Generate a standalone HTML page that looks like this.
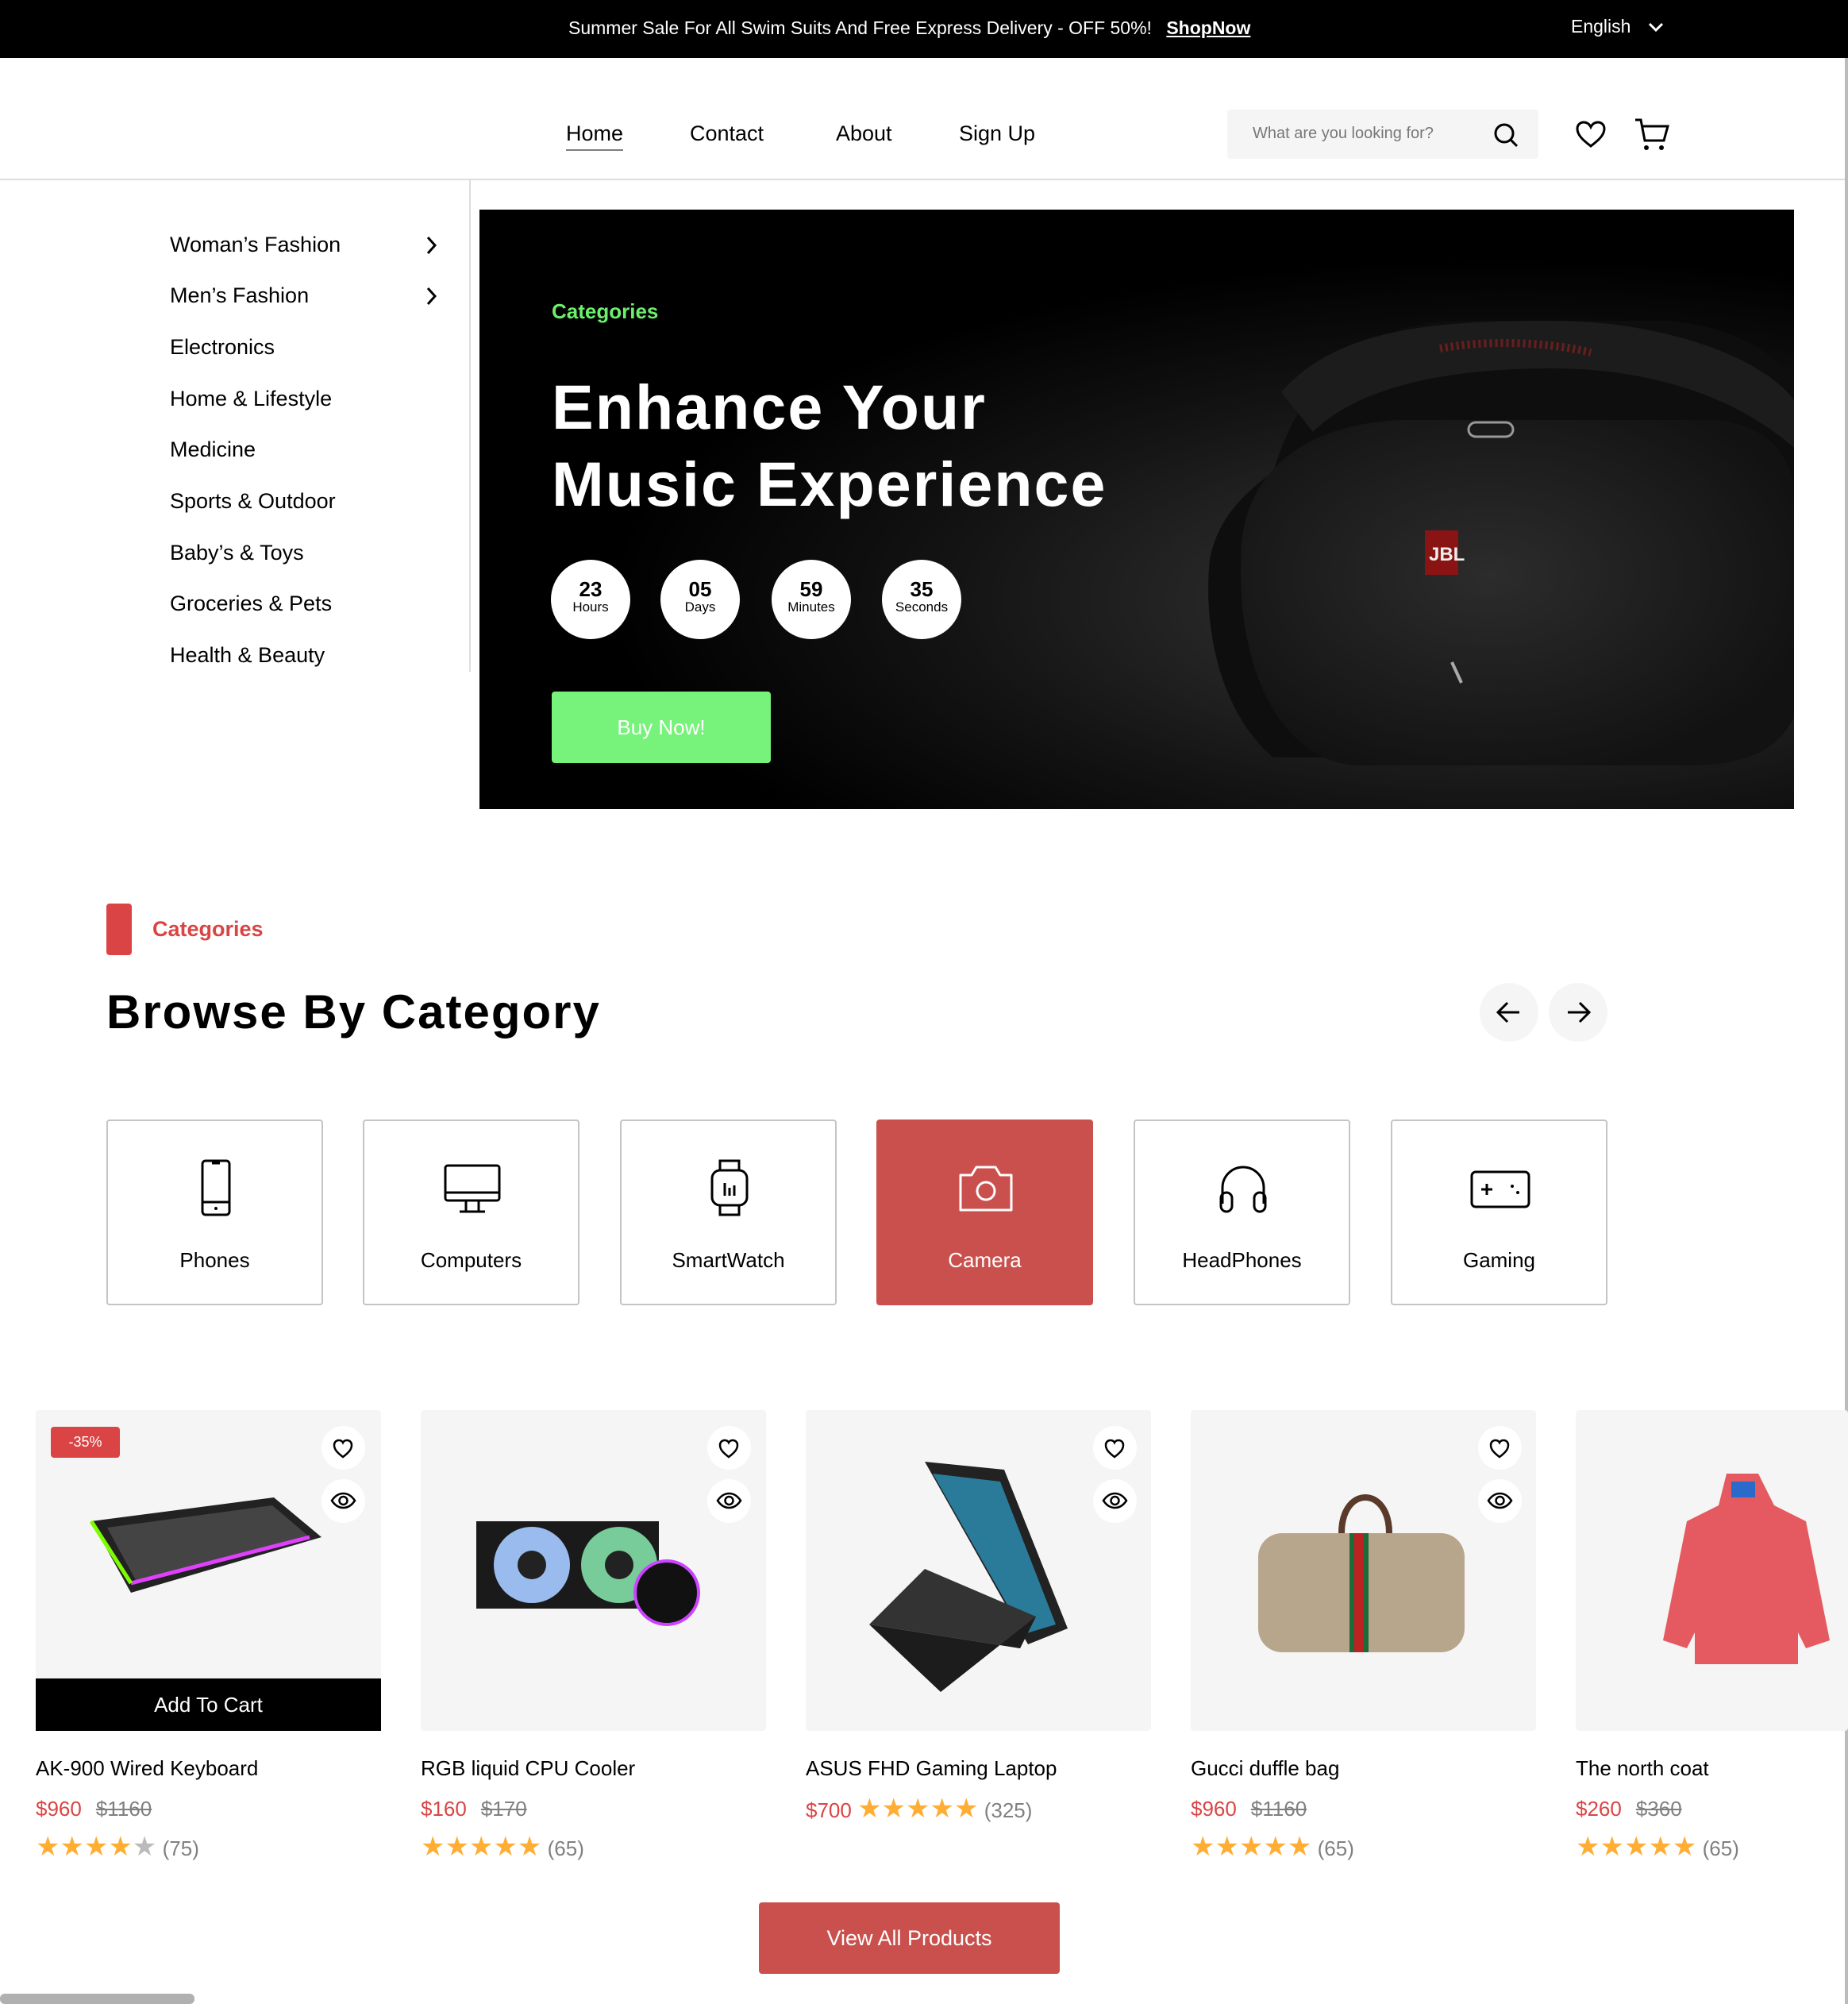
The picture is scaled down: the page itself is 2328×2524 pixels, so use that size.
<!DOCTYPE html>
<html><head><meta charset="utf-8"><style>
*{margin:0;padding:0;box-sizing:border-box}
body{width:2328px;height:2524px;position:relative;background:#fff;font-family:"Liberation Sans",sans-serif;color:#000;overflow:hidden}
.a{position:absolute}
.top{left:0;top:0;width:2328px;height:73px;background:#000;color:#fff;font-size:23px}
.nav{font-size:27px}
.side{font-size:27px;left:214px}
.circ{width:100px;height:100px;border-radius:50%;background:#fff;text-align:center;color:#000}
.circ b{display:block;font-size:26px;margin-top:24px;line-height:26px}
.circ span{display:block;font-size:17px;line-height:20px}
.cat{width:273px;height:234px;border:2px solid #c4c4c4;border-radius:4px;text-align:center;font-size:26px}
.cat svg{position:absolute;left:96px;top:44px}
.cat div{position:absolute;left:0;right:0;top:160px}
.card{width:435px;height:404px;top:1776px;background:#f5f5f5;border-radius:4px}
.ic{width:55px;height:55px;border-radius:50%;background:#fff;right:20px}
.pn{font-size:26px;top:2212px}
.pr{font-size:26px;top:2263px;color:#DB4444}
.pr s{color:#808080;margin-left:18px}
.st{top:2306px;font-size:26px;color:#808080}
.st i{font-style:normal;color:#FFAD33;font-size:34px;letter-spacing:0px}
</style></head><body>
<div class="a top">
 <div class="a" style="left:716px;top:22px">Summer Sale For All Swim Suits And Free Express Delivery - OFF 50%! <b style="text-decoration:underline;margin-left:12px">ShopNow</b></div>
 <div class="a" style="left:1979px;top:20px">English <svg width="22" height="14" style="margin-left:14px" viewBox="0 0 22 14"><path d="M3 3l8 8 8-8" stroke="#fff" stroke-width="3" fill="none"/></svg></div>
</div>
<div class="a" style="left:2324px;top:73px;width:4px;height:2451px;background:#bbb"></div>
<div class="a nav" style="left:713px;top:153px;border-bottom:2px solid #7d7d7d;padding-bottom:4px">Home</div>
<div class="a nav" style="left:869px;top:153px">Contact</div>
<div class="a nav" style="left:1053px;top:153px">About</div>
<div class="a nav" style="left:1208px;top:153px">Sign Up</div>
<div class="a" style="left:1546px;top:138px;width:392px;height:62px;background:#f5f5f5;border-radius:4px;font-size:20px;color:#777;padding:19px 0 0 32px">What are you looking for?
 <svg class="a" style="right:24px;top:15px" width="34" height="34" viewBox="0 0 34 34"><circle cx="15" cy="15" r="11" stroke="#000" stroke-width="3" fill="none"/><path d="M23 23l8 8" stroke="#000" stroke-width="3"/></svg></div>
<svg class="a" style="left:1984px;top:151px" width="40" height="36" viewBox="0 0 40 36"><path d="M20 33C8 24 3 18 3 11 3 6 7 3 11 3c4 0 7 2 9 6 2-4 5-6 9-6 4 0 8 3 8 8 0 7-5 13-17 22z" stroke="#000" stroke-width="3" fill="none"/></svg>
<svg class="a" style="left:2058px;top:147px" width="46" height="46" viewBox="0 0 46 46"><path d="M2 4h7l5 26h24l5-18H12" stroke="#000" stroke-width="3" fill="none"/><circle cx="16" cy="39" r="3"/><circle cx="35" cy="39" r="3"/></svg>
<div class="a" style="left:0;top:225px;width:2324px;height:2px;background:#ddd"></div>
<div class="a" style="left:591px;top:226px;width:2px;height:620px;background:#ddd"></div>
<div class="a side" style="top:293px">Woman’s Fashion</div>
<div class="a side" style="top:357px">Men’s Fashion</div>
<svg class="a" style="left:534px;top:296px" width="20" height="26"><path d="M5 3l9 10-9 10" stroke="#000" stroke-width="3" fill="none"/></svg>
<svg class="a" style="left:534px;top:360px" width="20" height="26"><path d="M5 3l9 10-9 10" stroke="#000" stroke-width="3" fill="none"/></svg>
<div class="a side" style="top:422px">Electronics</div>
<div class="a side" style="top:487px">Home &amp; Lifestyle</div>
<div class="a side" style="top:551px">Medicine</div>
<div class="a side" style="top:616px">Sports &amp; Outdoor</div>
<div class="a side" style="top:681px">Baby’s &amp; Toys</div>
<div class="a side" style="top:745px">Groceries &amp; Pets</div>
<div class="a side" style="top:810px">Health &amp; Beauty</div>
<div class="a" style="left:604px;top:264px;width:1656px;height:755px;background:radial-gradient(ellipse at 78% 65%,#3a3a3a 0%,#141414 38%,#000 62%);overflow:hidden">
 <svg class="a" style="left:0;top:0" width="1656" height="755" viewBox="0 0 1656 755">
  <defs><radialGradient id="g" cx="0.45" cy="0.45" r="0.6"><stop offset="0" stop-color="#2c2c2c"/><stop offset="1" stop-color="#121212"/></radialGradient></defs>
  <path d="M1000 330 C1040 200 1120 140 1240 140 L1500 140 C1600 150 1656 200 1656 230 L1656 620 C1620 700 1600 690 1500 690 L1000 690 C940 640 910 540 920 440 C930 390 960 360 1000 330z" fill="#0e0e0e"/>
  <path d="M1010 230 C1080 150 1200 140 1350 140 C1500 140 1620 190 1656 240 L1656 300 C1600 250 1500 200 1350 200 C1200 200 1100 230 1050 280z" fill="#1c1c1c"/>
  <path d="M1210 175 C1260 165 1340 165 1400 180" stroke="#6a1e1e" stroke-width="10" fill="none" stroke-dasharray="3 4"/>
  <path d="M960 420 C970 320 1050 270 1160 265 L1560 265 C1640 275 1656 330 1656 360 L1656 640 C1630 690 1580 700 1520 700 L1100 700 C1010 690 950 580 960 420z" fill="url(#g)"/>
  <rect x="1191" y="404" width="42" height="56" fill="#8a1414"/>
  <text x="1196" y="442" font-family="Liberation Sans" font-weight="bold" font-size="24" fill="#eee">JBL</text>
  <rect x="1246" y="268" width="56" height="18" rx="9" stroke="#999" stroke-width="3" fill="none"/>
  <path d="M1225 570 l12 26" stroke="#aaa" stroke-width="4"/>
 </svg>
 <div class="a" style="left:91px;top:113px;color:#6cf06c;font-size:26px;font-weight:bold">Categories</div>
 <div class="a" style="left:91px;top:200px;color:#fff;font-size:79px;font-weight:bold;line-height:97px;letter-spacing:2px">Enhance Your<br>Music Experience</div>
 <div class="a circ" style="left:90px;top:441px"><b>23</b><span>Hours</span></div>
 <div class="a circ" style="left:228px;top:441px"><b>05</b><span>Days</span></div>
 <div class="a circ" style="left:368px;top:441px"><b>59</b><span>Minutes</span></div>
 <div class="a circ" style="left:507px;top:441px"><b>35</b><span>Seconds</span></div>
 <div class="a" style="left:91px;top:607px;width:276px;height:90px;background:#77F27A;border-radius:4px;color:#fff;font-size:26px;text-align:center;line-height:90px">Buy Now!</div>
</div>
<div class="a" style="left:134px;top:1138px;width:32px;height:65px;background:#DB4444;border-radius:4px"></div>
<div class="a" style="left:192px;top:1155px;font-size:27px;font-weight:bold;color:#DB4444">Categories</div>
<div class="a" style="left:134px;top:1240px;font-size:60px;font-weight:bold;letter-spacing:2px">Browse By Category</div>
<div class="a" style="left:1864px;top:1238px;width:74px;height:74px;border-radius:50%;background:#f5f5f5"><svg width="74" height="74"><path d="M50 37H24M35 25L23 37l12 12" stroke="#000" stroke-width="3" fill="none"/></svg></div>
<div class="a" style="left:1951px;top:1238px;width:74px;height:74px;border-radius:50%;background:#f5f5f5"><svg width="74" height="74"><path d="M24 37h26M39 25l12 12-12 12" stroke="#000" stroke-width="3" fill="none"/></svg></div>
<div class="a cat" style="left:134px;top:1410px"><svg width="80" height="80" viewBox="0 0 80 80"><rect x="23" y="6" width="34" height="68" rx="4" stroke="#000" stroke-width="3" fill="none"/><path d="M23 58h34M35 9h10" stroke="#000" stroke-width="3"/><circle cx="40" cy="66" r="2"/></svg><div>Phones</div></div>
<div class="a cat" style="left:457px;top:1410px"><svg width="80" height="80" viewBox="0 0 80 80"><rect x="6" y="12" width="68" height="44" rx="3" stroke="#000" stroke-width="3" fill="none"/><path d="M6 46h68M32 56v14M48 56v14M24 70h32" stroke="#000" stroke-width="3" fill="none"/></svg><div>Computers</div></div>
<div class="a cat" style="left:781px;top:1410px"><svg width="80" height="80" viewBox="0 0 80 80"><rect x="18" y="18" width="44" height="44" rx="10" stroke="#000" stroke-width="3" fill="none"/><path d="M28 18V6h24v12M28 62v12h24V62M34 34v16M40 40v10M46 37v13" stroke="#000" stroke-width="3" fill="none"/></svg><div>SmartWatch</div></div>
<div class="a cat" style="left:1104px;top:1410px;background:#C9504C;border-color:#C9504C;color:#fff"><svg width="80" height="80" viewBox="0 0 80 80"><path d="M8 24h14l6-10h24l6 10h14v44H8z" stroke="#fff" stroke-width="3" fill="none" stroke-linejoin="round"/><circle cx="40" cy="44" r="11" stroke="#fff" stroke-width="3" fill="none"/></svg><div>Camera</div></div>
<div class="a cat" style="left:1428px;top:1410px"><svg width="80" height="80" viewBox="0 0 80 80"><path d="M14 60V40a26 26 0 0 1 52 0v20" stroke="#000" stroke-width="3" fill="none"/><rect x="12" y="46" width="14" height="24" rx="7" stroke="#000" stroke-width="3" fill="none"/><rect x="54" y="46" width="14" height="24" rx="7" stroke="#000" stroke-width="3" fill="none"/></svg><div>HeadPhones</div></div>
<div class="a cat" style="left:1752px;top:1410px"><svg width="80" height="80" viewBox="0 0 80 80"><rect x="4" y="20" width="72" height="44" rx="5" stroke="#000" stroke-width="3" fill="none"/><path d="M16 42h14M23 35v14" stroke="#000" stroke-width="3"/><circle cx="55" cy="38" r="2"/><circle cx="62" cy="46" r="2"/></svg><div>Gaming</div></div>

<div class="a card" style="left:45px">
 <div class="a" style="left:19px;top:21px;width:87px;height:39px;background:#DB4444;border-radius:4px;color:#fff;font-size:18px;text-align:center;line-height:39px">-35%</div>
 <svg class="a" style="left:60px;top:100px" width="320" height="140"><path d="M10 40L240 10 300 60 60 130z" fill="#222"/><path d="M30 48L238 20 285 60 68 118z" fill="#444"/><path d="M60 118L285 60" stroke="#e040fb" stroke-width="5"/><path d="M10 40L60 118" stroke="#7cfc00" stroke-width="5"/></svg>
 <div class="a" style="left:0;bottom:0;width:435px;height:66px;background:#000;color:#fff;font-size:26px;text-align:center;line-height:66px">Add To Cart</div>
</div>
<div class="a card" style="left:530px"><svg class="a" style="left:70px;top:130px" width="310" height="150"><rect x="0" y="10" width="230" height="110" fill="#1a1a1a"/><circle cx="70" cy="65" r="48" fill="#9be"/><circle cx="70" cy="65" r="18" fill="#222"/><circle cx="180" cy="65" r="48" fill="#7c9"/><circle cx="180" cy="65" r="18" fill="#222"/><circle cx="240" cy="100" r="40" fill="#111" stroke="#c4f" stroke-width="4"/></svg></div>
<div class="a card" style="left:1015px"><svg class="a" style="left:80px;top:60px" width="280" height="300"><path d="M70 5l100 10 80 200-50 20z" fill="#222"/><path d="M80 20l85 10 70 180-40 12z" fill="#2a7a9a"/><path d="M0 210L190 240 210 200 70 140z" fill="#333"/><path d="M0 210L90 295 210 200 190 240z" fill="#1c1c1c"/></svg></div>
<div class="a card" style="left:1500px"><svg class="a" style="left:70px;top:95px" width="300" height="240"><path d="M120 60 C120 0 180 0 180 60" stroke="#5a3a2a" stroke-width="8" fill="none"/><rect x="15" y="60" width="260" height="150" rx="30" fill="#b8a68c"/><rect x="130" y="60" width="24" height="150" fill="#1e6b3a"/><rect x="136" y="60" width="12" height="150" fill="#b22"/></svg></div>
<div class="a card" style="left:1985px;width:343px"><svg class="a" style="left:100px;top:80px" width="230" height="240"><path d="M90 0h40l20 40 40 20 30 150-30 10-10-20v50H50v-50l-10 20-30-10L40 60l40-20z" fill="#e55a60"/><rect x="96" y="10" width="30" height="20" fill="#2a6acb"/></svg></div>
<div class="a ic" style="left:405px;top:1796px"><svg width="55" height="55"><path d="M27 39C19 33 16 29 16 24c0-3 2-6 6-6 2 0 4 1 5 3 1-2 3-3 5-3 4 0 6 3 6 6 0 5-3 9-11 15z" stroke="#000" stroke-width="2.5" fill="none"/></svg></div>
<div class="a ic" style="left:405px;top:1863px"><svg width="55" height="55"><path d="M13 27c8-12 21-12 29 0-8 12-21 12-29 0z" stroke="#000" stroke-width="2.5" fill="none"/><circle cx="27.5" cy="27" r="5" stroke="#000" stroke-width="2.5" fill="none"/></svg></div>
<div class="a ic" style="left:891px;top:1796px"><svg width="55" height="55"><path d="M27 39C19 33 16 29 16 24c0-3 2-6 6-6 2 0 4 1 5 3 1-2 3-3 5-3 4 0 6 3 6 6 0 5-3 9-11 15z" stroke="#000" stroke-width="2.5" fill="none"/></svg></div>
<div class="a ic" style="left:891px;top:1863px"><svg width="55" height="55"><path d="M13 27c8-12 21-12 29 0-8 12-21 12-29 0z" stroke="#000" stroke-width="2.5" fill="none"/><circle cx="27.5" cy="27" r="5" stroke="#000" stroke-width="2.5" fill="none"/></svg></div>
<div class="a ic" style="left:1377px;top:1796px"><svg width="55" height="55"><path d="M27 39C19 33 16 29 16 24c0-3 2-6 6-6 2 0 4 1 5 3 1-2 3-3 5-3 4 0 6 3 6 6 0 5-3 9-11 15z" stroke="#000" stroke-width="2.5" fill="none"/></svg></div>
<div class="a ic" style="left:1377px;top:1863px"><svg width="55" height="55"><path d="M13 27c8-12 21-12 29 0-8 12-21 12-29 0z" stroke="#000" stroke-width="2.5" fill="none"/><circle cx="27.5" cy="27" r="5" stroke="#000" stroke-width="2.5" fill="none"/></svg></div>
<div class="a ic" style="left:1862px;top:1796px"><svg width="55" height="55"><path d="M27 39C19 33 16 29 16 24c0-3 2-6 6-6 2 0 4 1 5 3 1-2 3-3 5-3 4 0 6 3 6 6 0 5-3 9-11 15z" stroke="#000" stroke-width="2.5" fill="none"/></svg></div>
<div class="a ic" style="left:1862px;top:1863px"><svg width="55" height="55"><path d="M13 27c8-12 21-12 29 0-8 12-21 12-29 0z" stroke="#000" stroke-width="2.5" fill="none"/><circle cx="27.5" cy="27" r="5" stroke="#000" stroke-width="2.5" fill="none"/></svg></div>

<div class="a pn" style="left:45px">AK-900 Wired Keyboard</div>
<div class="a pn" style="left:530px">RGB liquid CPU Cooler</div>
<div class="a pn" style="left:1015px">ASUS FHD Gaming Laptop</div>
<div class="a pn" style="left:1500px">Gucci duffle bag</div>
<div class="a pn" style="left:1985px">The north coat</div>
<div class="a pr" style="left:45px">$960<s>$1160</s></div>
<div class="a pr" style="left:530px">$160<s>$170</s></div>
<div class="a pr" style="left:1015px;top:2258px">$700 <span class="st" style="position:static"><i>★★★★★</i> (325)</span></div>
<div class="a pr" style="left:1500px">$960<s>$1160</s></div>
<div class="a pr" style="left:1985px">$260<s>$360</s></div>
<div class="a st" style="left:45px"><i>★★★★</i><i style="color:#bbb">★</i> (75)</div>
<div class="a st" style="left:530px"><i>★★★★★</i> (65)</div>
<div class="a st" style="left:1500px"><i>★★★★★</i> (65)</div>
<div class="a st" style="left:1985px"><i>★★★★★</i> (65)</div>
<div class="a" style="left:956px;top:2396px;width:379px;height:90px;background:#C9504C;border-radius:4px;color:#fff;font-size:27px;text-align:center;line-height:90px">View All Products</div>
<div class="a" style="left:0;top:2511px;width:245px;height:13px;background:#b0b0b0;border-radius:6px"></div>
</body></html>
